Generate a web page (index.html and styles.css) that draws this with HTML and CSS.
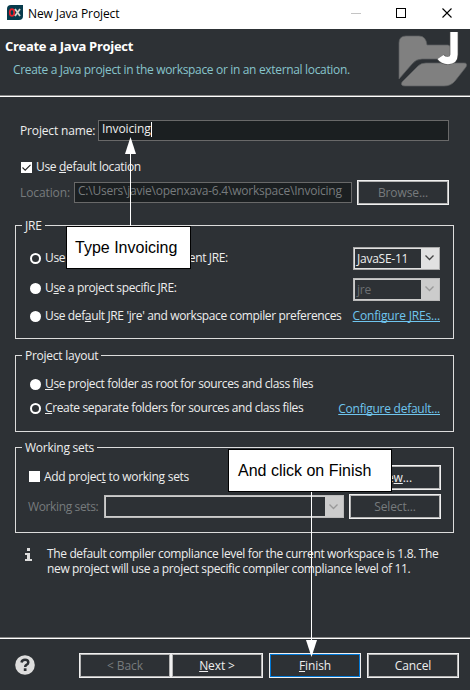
FILE: index.html
```html
<!DOCTYPE html>
<html lang="en">
<head>
<meta charset="utf-8">
<title>New Java Project</title>
<link rel="stylesheet" href="styles.css">
</head>
<body>
<div class="window">
  <div class="titlebar">
    <svg class="logo" width="16" height="16" viewBox="0 0 16 16"><path d="M4 0H16V11Q16 15 12 15H0V4Q0 0 4 0Z" fill="#073b4c"/><ellipse cx="5" cy="7.5" rx="2.2" ry="3.4" fill="none" stroke="#e5202b" stroke-width="1.8"/><path d="M8 4L13 11M13 4L8 11" stroke="#d8d3cb" stroke-width="1.8"/></svg>
    <span class="t-title">New Java Project</span>
    <svg class="controls" width="102" height="12" viewBox="0 0 102 12"><path d="M0 6.5H10" stroke="#c4c4c4"/><rect x="45.5" y="1.5" width="9" height="9" fill="none" stroke="#000"/><path d="M91.5 1.5L100.5 10.5M100.5 1.5L91.5 10.5" stroke="#000" stroke-width="1.1"/></svg>
  </div>
  <header class="banner">
    <div>
      <h1>Create a Java Project</h1>
      <p>Create a Java project in the workspace or in an external location.</p>
    </div>
    <svg class="folder" width="70" height="58" viewBox="0 0 70 58"><g fill="#808080" stroke="#5d6062" stroke-width=".7"><path d="M1 50V14Q1 7 8 7H21Q28 7 29 16H50Q54 17 54 21V30H24Q18 30 14 35Z"/><path d="M20 37Q23 34 28 34H66Q70 34 68 38L57 52Q53 57 46 57H7Q2 57 4 53Z"/></g><path d="M56 3V25.500Q56 31.500 50 31.500Q45 31.500 42.500 28" fill="none" stroke="#555" stroke-width="8.500"/><path d="M56 3V25.500Q56 31.500 50 31.500Q45 31.500 42.500 28" fill="none" stroke="#fff" stroke-width="7.300"/></svg>
  </header>
  <main>
    <div class="row name-row"><label class="t-name">Project name:</label><div class="field"><span class="t-inv">Invoicing</span><i class="caret"></i></div></div>
    <div class="row default-row"><i class="check"><svg width="11" height="11" viewBox="0 0 11 11"><path d="M1.500 5.500L4.200 8.200L9.500 2.800" fill="none" stroke="#222" stroke-width="1.1"/></svg></i><span class="t-default">Use <u>d</u>efault location</span></div>
    <div class="row location-row disabled"><label class="t-loc">Location:</label><div class="field"><span class="t-path">C:\Users\javie\openxava-6.4\workspace\Invoicing</span></div><div class="button">Browse...</div></div>

    <section class="group jre">
      <h2 class="t-jre">JRE</h2>
      <div class="row r1"><i class="radio on"></i><span class="t-env">Use an execution environment JRE:</span><div class="combo"><span>JavaSE-11</span><b><svg width="9" height="6" viewBox="0 0 9 6"><path d="M.5 .5L4.500 4.500L8.500 .5"/></svg></b></div></div>
      <div class="row r2"><i class="radio"></i><span class="t-spec">U<u>s</u>e a project specific JRE:</span><div class="combo off"><span>jre</span><b><svg width="9" height="6" viewBox="0 0 9 6"><path d="M.5 .5L4.500 4.500L8.500 .5"/></svg></b></div></div>
      <div class="row r3"><i class="radio"></i><span class="t-pref">Use def<u>a</u>ult JRE 'jre' and workspace compiler preferences</span><a class="t-conf">Configure JREs...</a></div>
    </section>

    <section class="group layout">
      <h2 class="t-layout">Project layout</h2>
      <div class="row l1"><i class="radio"></i><span class="t-root"><u>U</u>se project folder as root for sources and class files</span></div>
      <div class="row l2"><i class="radio on"></i><span class="t-sep"><u>C</u>reate separate folders for sources and class files</span><a class="t-confd">Configure default...</a></div>
    </section>

    <section class="group sets">
      <h2 class="t-sets">Working sets</h2>
      <div class="row s1"><i class="check"></i><span class="t-add">Add projec<u>t</u> to working sets</span><div class="button">Ne<u>w</u>...</div></div>
      <div class="row s2 disabled"><span class="t-ws">Working sets:</span><div class="combo off"><span></span><b><svg width="9" height="6" viewBox="0 0 9 6"><path d="M.5 .5L4.500 4.500L8.500 .5"/></svg></b></div><div class="button">Select...</div></div>
    </section>

    <div class="info">
      <svg width="7" height="13" viewBox="0 0 7 13"><path d="M2 0H5V3H2ZM0 5H5V11H7V13H0V11H2V7H0Z" fill="#ddd"/></svg>
      <p><span class="t-i1">The default compiler compliance level for the current workspace is 1.8. The</span><br><span class="t-i2">new project will use a project specific compiler compliance level of 11.</span></p>
    </div>
  </main>
  <footer>
    <svg class="help" width="20" height="20" viewBox="0 0 20 20"><circle cx="10" cy="10" r="9.800" fill="#ddd"/><path d="M6.500 7.500Q7 4.800 10 4.800Q13.300 4.800 13.300 7.400Q13.300 8.800 11.400 9.800Q10.200 10.400 10.200 12" fill="none" stroke="#2d3135" stroke-width="2.500"/><rect x="8.800" y="13.300" width="2.700" height="2.700" fill="#2d3135"/></svg>
    <div class="button muted t-back">&lt; Back</div><div class="button"><span class="t-next"><u>N</u>ext &gt;</span></div><div class="button primary"><span class="t-fin"><u>F</u>inish</span></div><div class="button"><span class="t-can">Cancel</span></div>
  </footer>

  <svg class="arrow up" width="12" height="90" viewBox="0 0 12 90"><path d="M6.500 12V90" stroke="#fff"/><path d="M6.500 0L12 17H1Z" fill="#fff"/></svg>
  <svg class="arrow down" width="12" height="167" viewBox="0 0 12 167"><path d="M6.500 0V155" stroke="#fff"/><path d="M6.500 167L12 150H1Z" fill="#fff"/></svg>
  <div class="note note-type"><span>Type Invoicing</span></div>
  <div class="note note-finish"><span>And click on Finish</span></div>
</div>
</body>
</html>
```

FILE: styles.css
```css
* { box-sizing: border-box; }
body { margin: 0; background: #2d3135; color: #eee; font: 12px/16px "Open Sans", "Noto Sans", sans-serif; letter-spacing: -0.1px; }
.window { position: relative; width: 470px; height: 690px; overflow: hidden; display: flex; flex-direction: column; }
h1, h2, p { margin: 0; font-size: 12px; font-weight: 400; }
u { text-decoration: underline 1px; text-underline-offset: 1px; text-decoration-skip-ink: none; }
span, label, a, h1, h2 { white-space: nowrap; }
i, b { display: block; flex: none; }
svg { display: block; flex: none; }

.titlebar { height: 29px; flex: none; background: #fff; color: #000; display: flex; align-items: center; padding: 0 17px 3px 7px; }
.titlebar .t-title { margin-left: 5px; padding-top: 2px; }
.controls { margin-left: auto; }
.banner { height: 68px; flex: none; display: flex; justify-content: space-between; padding: 9px 2px 0 5px; border-bottom: 1px solid #fff; box-shadow: inset 0 -1px #888; }
.banner h1 { font-size: 13px; font-weight: 700; color: #fff; letter-spacing: -0.31px; }
.banner p { margin: 8px 0 0 8px; color: #87c4cc; white-space: nowrap; letter-spacing: -0.33px; }
.folder { margin-top: -9px; }

main { flex: 1; padding: 23px 15px 0; }
.row { display: flex; align-items: center; }
.field { border: 1px solid #696969; background: #1b1f21; height: 21px; display: flex; padding-left: 3px; line-height: 16px; }
.caret { width: 1px; height: 15px; margin-top: 1px; background: #fff; }
.name-row { height: 21px; padding: 0 6px 0 5px; }
.name-row label { width: 78px; letter-spacing: -0.15px; }
.name-row .field { flex: 1; }
.default-row { height: 16px; margin-top: 18px; padding-left: 6px; }
.check { width: 11px; height: 11px; background: #fff; }
.default-row span { margin-left: 4px; letter-spacing: -0.33px; }
.location-row { height: 25px; margin-top: 5px; padding: 0 6px 0 5px; }
.location-row label { width: 54px; padding-top: 1px; }
.location-row .field { width: 278px; margin-top: -1px; letter-spacing: -0.23px; }
.location-row .button { margin-left: 5px; }
.disabled, .disabled .button, .muted { color: #777b7d; }
.button { width: 92px; height: 25px; flex: none; border: 1px solid #f0f0f0; box-shadow: inset 0 0 0 1px #b4b4b4; display: flex; align-items: center; justify-content: center; padding-top: 1px; }

.group { position: relative; border: 1px solid #dcdcdc; width: 439px; padding: 0 13px; }
.group h2 { position: absolute; left: 6px; top: -8px; padding: 0 3px 0 3px; background: #2d3135; letter-spacing: -0.25px; }
.group .row { height: 24px; }
.group .row > span { letter-spacing: -0.37px; }
.radio { width: 11px; height: 11px; border-radius: 50%; background: #fff; margin: 0 4px 0 1px; }
.radio.on { background: #2d3135; border: 2.500px solid #fff; }
.combo { width: 87px; height: 23px; margin-left: auto; flex: none; border: 1px solid #aaa; background: #e1e1e1; padding: 1px; display: flex; }
.combo span { flex: 1; background: #2d3135; line-height: 19px; padding-left: 2px; letter-spacing: -0.25px; }
.combo b { width: 17px; display: grid; place-items: center; }
.combo path { fill: none; stroke: #444; stroke-width: 1.3; }
.combo.off { border-color: #bbb; background: #ccc; color: #6c7073; }
.combo.off path { stroke: #999; }
.group a { margin-left: auto; color: #6fc5ee; text-decoration: underline 1px; text-underline-offset: 1px; text-decoration-skip-ink: none; }
.jre { height: 114px; margin-top: 20px; }
.jre .r1 { margin-top: 20px; }
.jre .r2 { margin-top: 7px; }
.jre .r2 .radio, .jre .r2 > span { position: relative; top: -1px; }
.jre .r3 { margin-top: 3px; }
.jre .t-conf { letter-spacing: -0.17px; }
.layout { height: 77px; margin-top: 16px; }
.layout .l1 { margin-top: 16px; }
.layout .l2 { margin-top: 0; }
.layout .t-sep { letter-spacing: -0.42px; }
.layout .t-confd { letter-spacing: -0.25px; padding-top: 1px; }
.sets { height: 86px; margin-top: 15px; padding: 0 12px; }
.sets .s1 { margin-top: 17px; height: 25px; }
.sets .s1 .check { margin: -2px 0 0 1px; }
.sets .row.s1 > span { margin: -1px auto 0 4px; letter-spacing: -0.28px; }
.sets .s2 { margin-top: 4px; height: 25px; }
.sets .s2 .combo { width: 240px; }
.sets .s2 .button { margin-left: 5px; }
.info { display: flex; margin-top: 13px; padding-left: 10px; }
.info svg { margin-top: 2px; }
.info p { margin-left: 15px; line-height: 15px; letter-spacing: -0.36px; }

footer { height: 52px; flex: none; border-top: 1px solid #fff; box-shadow: 0 -1px #888; display: flex; padding: 14px 11px 0 15px; }
.help { margin-right: 44px; margin-top: 2px; }
footer .primary { margin: 0 6px; box-shadow: inset 0 0 0 1px #0078d7; }

.arrow { position: absolute; }
.up { left: 124px; top: 137px; }
.down { left: 305px; top: 490px; }
.note { position: absolute; background: #fff; color: #000; border: 1px solid #000; font: 16px/20px "Liberation Sans", sans-serif; letter-spacing: 0; }
.note-type { left: 66px; top: 226px; width: 125px; height: 43px; padding: 11px 0 0 8px; }
.note-finish { left: 228px; top: 449px; width: 164px; height: 43px; padding: 11px 0 0 9px; }
```
